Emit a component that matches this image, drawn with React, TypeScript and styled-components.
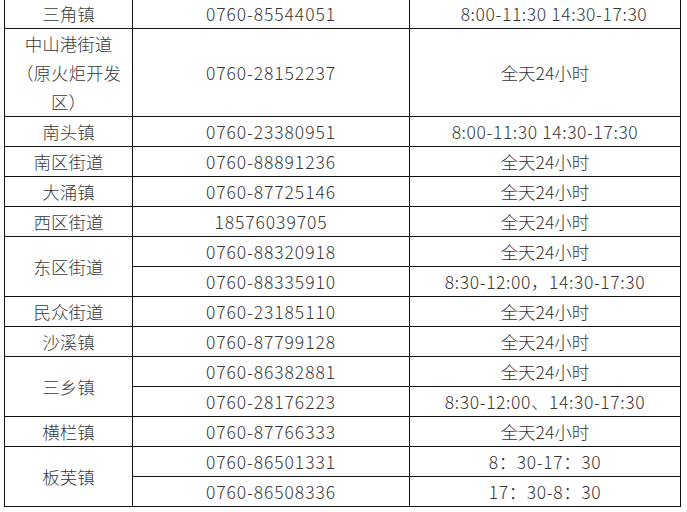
import { createGlobalStyle, styled } from "styled-components";

const GlobalStyle = createGlobalStyle`
  html, body {
    margin: 0;
    padding: 0;
    background: #ffffff;
  }
`;

const Page = styled.div`
  width: 687px;
  height: 512px;
  overflow: hidden;
  background: #ffffff;
`;

const Table = styled.table`
  margin: -2px 0 0 4px;
  width: 676px;
  border-collapse: collapse;
  table-layout: fixed;
  font-family: "Noto Sans CJK SC", "Liberation Sans", sans-serif;
  font-size: 17.5px;
  font-weight: 300;
  color: #383838;
`;

const Row = styled.tr<{ $tall?: boolean }>`
  height: ${(p) => (p.$tall ? "88px" : "30px")};
`;

const Cell = styled.td<{ $shift?: number; $spaced?: number }>`
  border: 1px solid #111;
  padding: 0 ${(p) => (p.$shift ? "0" : "2px")} 0 ${(p) => (p.$shift ? `${p.$shift}px` : "2px")};
  text-align: center;
  vertical-align: middle;
  line-height: 29px;
  white-space: nowrap;
  letter-spacing: ${(p) => (p.$spaced ? `${p.$spaced}px` : "0")};
`;

type Line = { phone: string; hours: string; shift?: number };
type Place = { name: string[]; lines: Line[]; tall?: boolean };

const places: Place[] = [
  { name: ["三角镇"], lines: [{ phone: "0760-85544051", hours: "8:00-11:30 14:30-17:30", shift: 18 }] },
  {
    name: ["中山港街道", "（原火炬开发", "区）"],
    lines: [{ phone: "0760-28152237", hours: "全天24小时" }],
    tall: true,
  },
  { name: ["南头镇"], lines: [{ phone: "0760-23380951", hours: "8:00-11:30 14:30-17:30" }] },
  { name: ["南区街道"], lines: [{ phone: "0760-88891236", hours: "全天24小时" }] },
  { name: ["大涌镇"], lines: [{ phone: "0760-87725146", hours: "全天24小时" }] },
  { name: ["西区街道"], lines: [{ phone: "18576039705", hours: "全天24小时" }] },
  {
    name: ["东区街道"],
    lines: [
      { phone: "0760-88320918", hours: "全天24小时" },
      { phone: "0760-88335910", hours: "8:30-12:00，14:30-17:30" },
    ],
  },
  { name: ["民众街道"], lines: [{ phone: "0760-23185110", hours: "全天24小时" }] },
  { name: ["沙溪镇"], lines: [{ phone: "0760-87799128", hours: "全天24小时" }] },
  {
    name: ["三乡镇"],
    lines: [
      { phone: "0760-86382881", hours: "全天24小时" },
      { phone: "0760-28176223", hours: "8:30-12:00、14:30-17:30" },
    ],
  },
  { name: ["横栏镇"], lines: [{ phone: "0760-87766333", hours: "全天24小时" }] },
  {
    name: ["板芙镇"],
    lines: [
      { phone: "0760-86501331", hours: "8：30-17：30" },
      { phone: "0760-86508336", hours: "17：30-8：30" },
    ],
  },
];

export default function App() {
  return (
    <Page>
      <GlobalStyle />
      <Table>
        <colgroup>
          <col style={{ width: 128 }} />
          <col style={{ width: 277 }} />
          <col style={{ width: 271 }} />
        </colgroup>
        <tbody>
          {places.flatMap((place) =>
            place.lines.map((line, i) => (
              <Row key={place.name[0] + i} $tall={place.tall}>
                {i === 0 ? (
                  <Cell rowSpan={place.lines.length}>
                    {place.name.map((n, j) => (
                      <div key={j}>{n}</div>
                    ))}
                  </Cell>
                ) : null}
                <Cell $spaced={0.9}>{line.phone}</Cell>
                <Cell $shift={line.shift} $spaced={line.hours.startsWith("全天") ? 0 : 0.6}>
                  {line.hours}
                </Cell>
              </Row>
            ))
          )}
        </tbody>
      </Table>
    </Page>
  );
}
